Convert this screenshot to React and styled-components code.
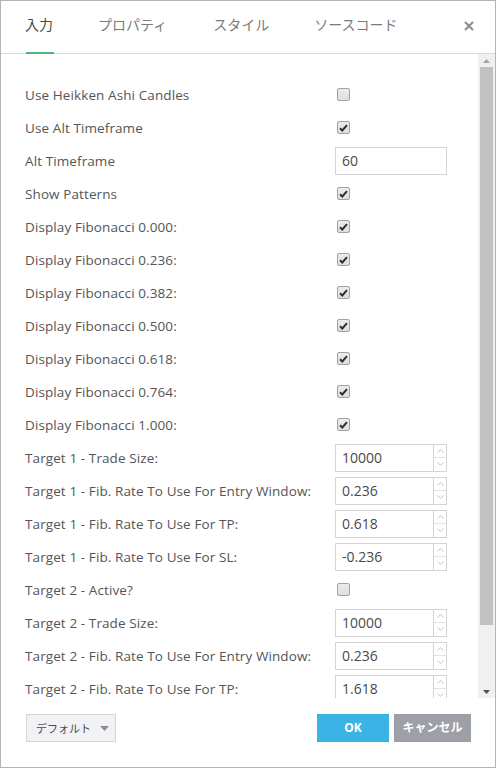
import React from "react";
import styled, { createGlobalStyle } from "styled-components";

const Global = createGlobalStyle`
  html, body { margin: 0; padding: 0; background: #fff; }
  body { font-family: "Open Sans", "Noto Sans CJK JP", sans-serif; }
  * { box-sizing: border-box; }
`;

const Dialog = styled.div`
  width: 496px;
  height: 768px;
  border: 1px solid #b4b4b4;
  display: flex;
  flex-direction: column;
  background: #fff;
  overflow: hidden;
`;

const Header = styled.div`
  height: 53px;
  flex: none;
  border-bottom: 1px solid #d9d9d9;
  display: flex;
  align-items: stretch;
  padding-left: 24px;
  position: relative;
`;

const Tab = styled.div`
  position: relative;
  display: flex;
  align-items: center;
  margin-right: ${(p) => p.$gap}px;
  font-family: "Noto Sans CJK JP", sans-serif;
  font-size: 14px;
  color: ${(p) => (p.$active ? "#4a4a4a" : "#7b7b7b")};
  padding-bottom: 6px;
  white-space: nowrap;
  &::after {
    content: "";
    display: ${(p) => (p.$active ? "block" : "none")};
    position: absolute;
    left: 1px;
    right: -1px;
    bottom: -1px;
    height: 2px;
    background: #4fb583;
  }
`;

const Close = styled.div`
  position: absolute;
  right: 20px;
  top: 19px;
  width: 12px;
  height: 12px;
  display: flex;
  align-items: center;
  justify-content: center;
`;

const Body = styled.div`
  flex: 1;
  display: flex;
  min-height: 0;
`;

const List = styled.div`
  flex: 1;
  overflow: hidden;
  padding: 24px 0 0 24px;
  display: flex;
  flex-direction: column;
`;

const Row = styled.div`
  height: 33px;
  flex: none;
  display: flex;
  align-items: center;
`;

const Label = styled.div`
  width: 310px;
  font-size: 13.5px;
  letter-spacing: 0.1px;
  color: #555555;
  white-space: nowrap;
`;

const Control = styled.div`
  width: 112px;
  display: flex;
  align-items: center;
`;

const CheckBox = styled.div`
  width: 13px;
  height: 13px;
  margin-left: 2px;
  border: 1px solid #a2a2a2;
  border-radius: 2px;
  background: linear-gradient(#ececec, #dedede);
  display: flex;
  align-items: center;
  justify-content: center;
`;

const TextBox = styled.div`
  width: 112px;
  height: 28px;
  border: 1px solid #d4d4d4;
  display: flex;
  align-items: center;
  padding-left: 6px;
  font-size: 14px;
  color: #4a4a4a;
`;

const NumberBox = styled.div`
  width: 112px;
  height: 28px;
  border: 1px solid #d4d4d4;
  display: flex;
`;

const NumberValue = styled.div`
  flex: 1;
  display: flex;
  align-items: center;
  padding-left: 6px;
  font-size: 14px;
  color: #4a4a4a;
`;

const Spinner = styled.div`
  width: 13px;
  border-left: 1px solid #d4d4d4;
  display: flex;
  flex-direction: column;
`;

const SpinHalf = styled.div`
  flex: 1;
  display: flex;
  align-items: center;
  justify-content: center;
  & + & { border-top: 1px solid #e2e2e2; }
`;

const ScrollBar = styled.div`
  width: 17px;
  flex: none;
  background: #f0f0f0;
  display: flex;
  flex-direction: column;
  align-items: center;
`;

const ScrollArrow = styled.div`
  height: 13px;
  width: 100%;
  display: flex;
  align-items: center;
  justify-content: center;
  flex: none;
`;

const Thumb = styled.div`
  width: 13px;
  height: 558px;
  background: #c1c1c1;
  flex: none;
`;

const Track = styled.div`
  flex: 1;
`;

const Footer = styled.div`
  height: 69px;
  flex: none;
  display: flex;
  align-items: flex-start;
  padding: 16px 24px 0 25px;
`;

const DefaultButton = styled.div`
  flex: none;
  width: 90px;
  height: 28px;
  border: 1px solid #d6d6d6;
  background: #f1f2f5;
  display: flex;
  align-items: center;
  padding-left: 9px;
  gap: 9px;
  font-family: "Noto Sans CJK JP", sans-serif;
  font-size: 11px;
  line-height: 14px;
  color: #4a4a4a;
  white-space: nowrap;
`;

const Spacer = styled.div`
  flex: 1;
`;

const ActionButton = styled.div`
  flex: none;
  height: 28px;
  width: ${(p) => p.$w}px;
  margin-left: ${(p) => p.$ml || 0}px;
  background: ${(p) => p.$bg};
  color: #fff;
  font-weight: 700;
  font-size: 12px;
  line-height: 16px;
  font-family: "Open Sans", "Noto Sans CJK JP", sans-serif;
  display: flex;
  align-items: center;
  justify-content: center;
  white-space: nowrap;
`;

const Check = () => (
  <svg width="9" height="8" viewBox="0 0 9 8">
    <path d="M1 4.3 L3.3 6.5 L8 1.2" stroke="#2f2f2f" strokeWidth="2" fill="none" />
  </svg>
);

const Chevron = ({ up }) => (
  <svg width="7" height="4" viewBox="0 0 7 4">
    <path d={up ? "M0.5 3.5 L3.5 0.7 L6.5 3.5" : "M0.5 0.5 L3.5 3.3 L6.5 0.5"} stroke="#b8c2cc" strokeWidth="1" fill="none" />
  </svg>
);

const rows = [
  { label: "Use Heikken Ashi Candles", type: "check", on: false },
  { label: "Use Alt Timeframe", type: "check", on: true },
  { label: "Alt Timeframe", type: "text", value: "60" },
  { label: "Show Patterns", type: "check", on: true },
  { label: "Display Fibonacci 0.000:", type: "check", on: true },
  { label: "Display Fibonacci 0.236:", type: "check", on: true },
  { label: "Display Fibonacci 0.382:", type: "check", on: true },
  { label: "Display Fibonacci 0.500:", type: "check", on: true },
  { label: "Display Fibonacci 0.618:", type: "check", on: true },
  { label: "Display Fibonacci 0.764:", type: "check", on: true },
  { label: "Display Fibonacci 1.000:", type: "check", on: true },
  { label: "Target 1 - Trade Size:", type: "num", value: "10000" },
  { label: "Target 1 - Fib. Rate To Use For Entry Window:", type: "num", value: "0.236" },
  { label: "Target 1 - Fib. Rate To Use For TP:", type: "num", value: "0.618" },
  { label: "Target 1 - Fib. Rate To Use For SL:", type: "num", value: "-0.236" },
  { label: "Target 2 - Active?", type: "check", on: false },
  { label: "Target 2 - Trade Size:", type: "num", value: "10000" },
  { label: "Target 2 - Fib. Rate To Use For Entry Window:", type: "num", value: "0.236" },
  { label: "Target 2 - Fib. Rate To Use For TP:", type: "num", value: "1.618" },
];

function renderControl(r) {
  if (r.type === "check") return <CheckBox>{r.on && <Check />}</CheckBox>;
  if (r.type === "text") return <TextBox>{r.value}</TextBox>;
  return (
    <NumberBox>
      <NumberValue>{r.value}</NumberValue>
      <Spinner>
        <SpinHalf><Chevron up /></SpinHalf>
        <SpinHalf><Chevron /></SpinHalf>
      </Spinner>
    </NumberBox>
  );
}

export default function App() {
  return (
    <>
      <Global />
      <Dialog>
        <Header>
          <Tab $active $gap={45}>入力</Tab>
          <Tab $gap={46}>プロパティ</Tab>
          <Tab $gap={45}>スタイル</Tab>
          <Tab $gap={0}>ソースコード</Tab>
          <Close>
            <svg width="10" height="10" viewBox="0 0 10 10">
              <path d="M1 1 L9 9 M9 1 L1 9" stroke="#8a8a8a" strokeWidth="2" />
            </svg>
          </Close>
        </Header>
        <Body>
          <List>
            {rows.map((r) => (
              <Row key={r.label}>
                <Label>{r.label}</Label>
                <Control>{renderControl(r)}</Control>
              </Row>
            ))}
          </List>
          <ScrollBar>
            <ScrollArrow>
              <svg width="7" height="4" viewBox="0 0 7 4"><path d="M0 4 L3.5 0 L7 4Z" fill="#a3a3a3" /></svg>
            </ScrollArrow>
            <Thumb />
            <Track />
            <ScrollArrow>
              <svg width="7" height="4" viewBox="0 0 7 4"><path d="M0 0 L3.5 4 L7 0Z" fill="#505050" /></svg>
            </ScrollArrow>
          </ScrollBar>
        </Body>
        <Footer>
          <DefaultButton>
            <span>デフォルト</span>
            <svg width="9" height="5" viewBox="0 0 9 5"><path d="M0 0 L4.5 5 L9 0Z" fill="#8e8e8e" /></svg>
          </DefaultButton>
          <Spacer />
          <ActionButton $w={72} $bg="#3bb3e4">OK</ActionButton>
          <ActionButton $w={77} $ml={5} $bg="#9ea0a8">キャンセル</ActionButton>
        </Footer>
      </Dialog>
    </>
  );
}
